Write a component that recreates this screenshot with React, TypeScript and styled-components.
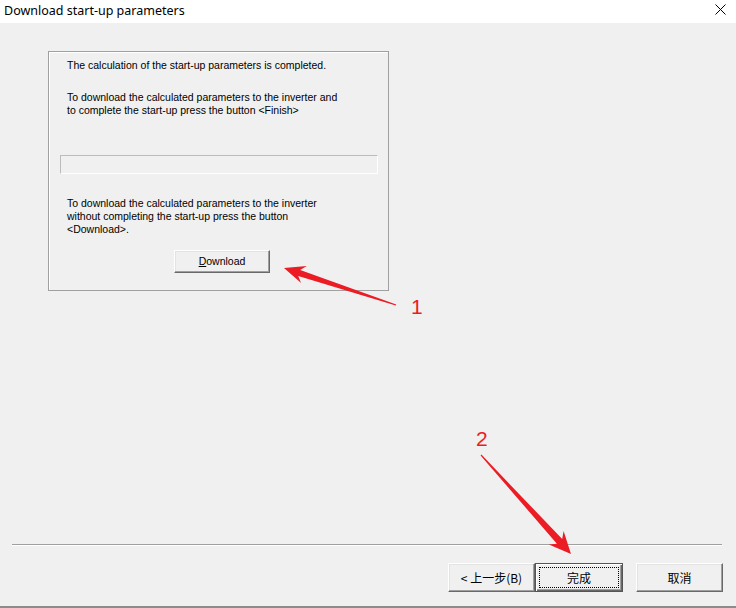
import React from "react";
import styled, { createGlobalStyle } from "styled-components";

const Global = createGlobalStyle`
  html, body { margin: 0; padding: 0; background: #f0f0f0; }
  body { font-family: "Liberation Sans", Arial, sans-serif; }
`;

const Window = styled.div`
  position: relative;
  width: 736px;
  height: 608px;
  box-sizing: border-box;
  background: #f0f0f0;
  border-bottom: 2px solid #8c8c8c;
  display: flex;
  flex-direction: column;
  overflow: hidden;
`;

const TitleBar = styled.div`
  height: 23px;
  flex: none;
  background: #ffffff;
  display: flex;
  align-items: center;
  justify-content: space-between;
  padding: 0 10px 0 4px;
  box-sizing: border-box;
`;

const Title = styled.span`
  font-family: "Noto Sans", "Open Sans", sans-serif;
  font-size: 12.5px;
  color: #000;
  line-height: 23px;
  margin-top: -2px;
`;

const CloseIcon = styled.svg`
  width: 11px;
  height: 11px;
  margin-top: -4px;
`;

const Content = styled.div`
  flex: 1;
  padding: 28px 0 0 48px;
`;

const GroupBox = styled.div`
  width: 341px;
  height: 240px;
  box-sizing: border-box;
  border: 1px solid #a0a0a0;
  box-shadow: inset 1px 1px 0 #ffffff;
  padding: 7px 0 0 0;
  display: flex;
  flex-direction: column;
`;

const Para = styled.p<{ $mt?: number }>`
  margin: ${(p) => p.$mt ?? 0}px 0 0 18px;
  font-size: 10.5px;
  line-height: 13px;
  color: #000;
  white-space: nowrap;
`;

const Progress = styled.div`
  margin: 38px 0 0 11px;
  width: 318px;
  height: 19px;
  box-sizing: border-box;
  border: 1px solid;
  border-color: #bcbcbc #ffffff #ffffff #bcbcbc;
  background: #f0f0f0;
`;

const ClassicButton = styled.button<{ $w: number; $h: number; $default?: boolean }>`
  width: ${(p) => p.$w}px;
  height: ${(p) => p.$h}px;
  box-sizing: border-box;
  padding: 0;
  margin: 0;
  background: #f0f0f0;
  border: 1px solid;
  border-color: ${(p) =>
    p.$default ? "#555555" : "#ffffff #696969 #696969 #ffffff"};
  box-shadow: ${(p) =>
    p.$default
      ? "inset 1px 1px 0 #ffffff, inset -1px -1px 0 #696969, inset -2px -2px 0 #a0a0a0"
      : "inset -1px -1px 0 #a0a0a0, inset 1px 1px 0 #e3e3e3"};
  font-family: "Noto Sans CJK SC", "Liberation Sans", sans-serif;
  font-size: 12px;
  color: #000;
  display: flex;
  align-items: center;
  justify-content: center;
  position: relative;
`;

const DownloadLabel = styled.span`
  font-family: "Liberation Sans", Arial, sans-serif;
  font-size: 10.5px;
  margin-top: -1px;
`;

const FocusRect = styled.span`
  position: absolute;
  inset: 3px;
  border: 1px dotted #000;
  pointer-events: none;
`;

const DownloadWrap = styled.div`
  margin: 14px 0 0 125px;
`;

const Separator = styled.div`
  margin: 0 14px 0 12px;
  height: 1px;
  background: #a0a0a0;
  border-bottom: 1px solid #ffffff;
`;

const Footer = styled.div`
  flex: none;
  display: flex;
  justify-content: flex-end;
  padding: 17px 13px 0 0;
  height: 60px;
  box-sizing: border-box;
`;

const ButtonGroup = styled.div<{ $gap: number }>`
  display: flex;
  gap: ${(p) => p.$gap}px;
`;

const Overlay = styled.svg`
  position: absolute;
  left: 0;
  top: 0;
  width: 736px;
  height: 608px;
  pointer-events: none;
`;

const Mnemonic = styled.u`
  text-decoration-thickness: 1px;
  text-underline-offset: 1px;
`;

function arrowPoints(
  tail: [number, number],
  tip: [number, number],
  headLen: number,
  wingHalf: number,
  jointLen: number,
  shaftHalf: number,
  tailHalf: number
): string {
  const dx = tip[0] - tail[0];
  const dy = tip[1] - tail[1];
  const len = Math.hypot(dx, dy);
  const ux = dx / len;
  const uy = dy / len;
  const nx = -uy;
  const ny = ux;
  const B = [tip[0] - ux * headLen, tip[1] - uy * headLen];
  const J = [tip[0] - ux * jointLen, tip[1] - uy * jointLen];
  const pts = [
    [tip[0], tip[1]],
    [B[0] + nx * wingHalf, B[1] + ny * wingHalf],
    [J[0] + nx * shaftHalf, J[1] + ny * shaftHalf],
    [tail[0] + nx * tailHalf, tail[1] + ny * tailHalf],
    [tail[0] - nx * tailHalf, tail[1] - ny * tailHalf],
    [J[0] - nx * shaftHalf, J[1] - ny * shaftHalf],
    [B[0] - nx * wingHalf, B[1] - ny * wingHalf],
  ];
  return pts.map((p) => `${p[0].toFixed(1)},${p[1].toFixed(1)}`).join(" ");
}

export default function App() {
  const a1 = arrowPoints([396, 305], [284, 268], 21, 9, 16, 3.2, 0.6);
  const a2 = arrowPoints([481, 455], [571, 554], 22, 10, 17, 3.6, 0.6);
  return (
    <>
      <Global />
      <Window>
        <TitleBar>
          <Title>Download start-up parameters</Title>
          <CloseIcon viewBox="0 0 11 11">
            <path d="M0.5 0.5 L10.5 10.5 M10.5 0.5 L0.5 10.5" stroke="#000" strokeWidth="1" fill="none" />
          </CloseIcon>
        </TitleBar>
        <Content>
          <GroupBox>
            <Para>The calculation of the start-up parameters is completed.</Para>
            <Para $mt={19}>
              To download the calculated parameters to the inverter and
              <br />
              to complete the start-up press the button &lt;Finish&gt;
            </Para>
            <Progress />
            <Para $mt={23}>
              To download the calculated parameters to the inverter
              <br />
              without completing the start-up press the button
              <br />
              &lt;Download&gt;.
            </Para>
            <DownloadWrap>
              <ClassicButton $w={96} $h={23}>
                <DownloadLabel>
                  <Mnemonic>D</Mnemonic>ownload
                </DownloadLabel>
              </ClassicButton>
            </DownloadWrap>
          </GroupBox>
        </Content>
        <Separator />
        <Footer>
          <ButtonGroup $gap={13}>
            <ButtonGroup $gap={0}>
              <ClassicButton $w={87} $h={29}>
                &lt; 上一步(B)
              </ClassicButton>
              <ClassicButton $w={88} $h={29} $default>
                完成
                <FocusRect />
              </ClassicButton>
            </ButtonGroup>
            <ClassicButton $w={87} $h={29}>
              取消
            </ClassicButton>
          </ButtonGroup>
        </Footer>
        <Overlay viewBox="0 0 736 608">
          <polygon points={a1} fill="#ec1c24" />
          <polygon points={a2} fill="#ec1c24" />
          <text x="411" y="314" fill="#ec1c24" fontFamily="Liberation Sans, Arial, sans-serif" fontSize="21">1</text>
          <text x="476" y="446" fill="#ec1c24" fontFamily="Liberation Sans, Arial, sans-serif" fontSize="21">2</text>
        </Overlay>
      </Window>
    </>
  );
}
